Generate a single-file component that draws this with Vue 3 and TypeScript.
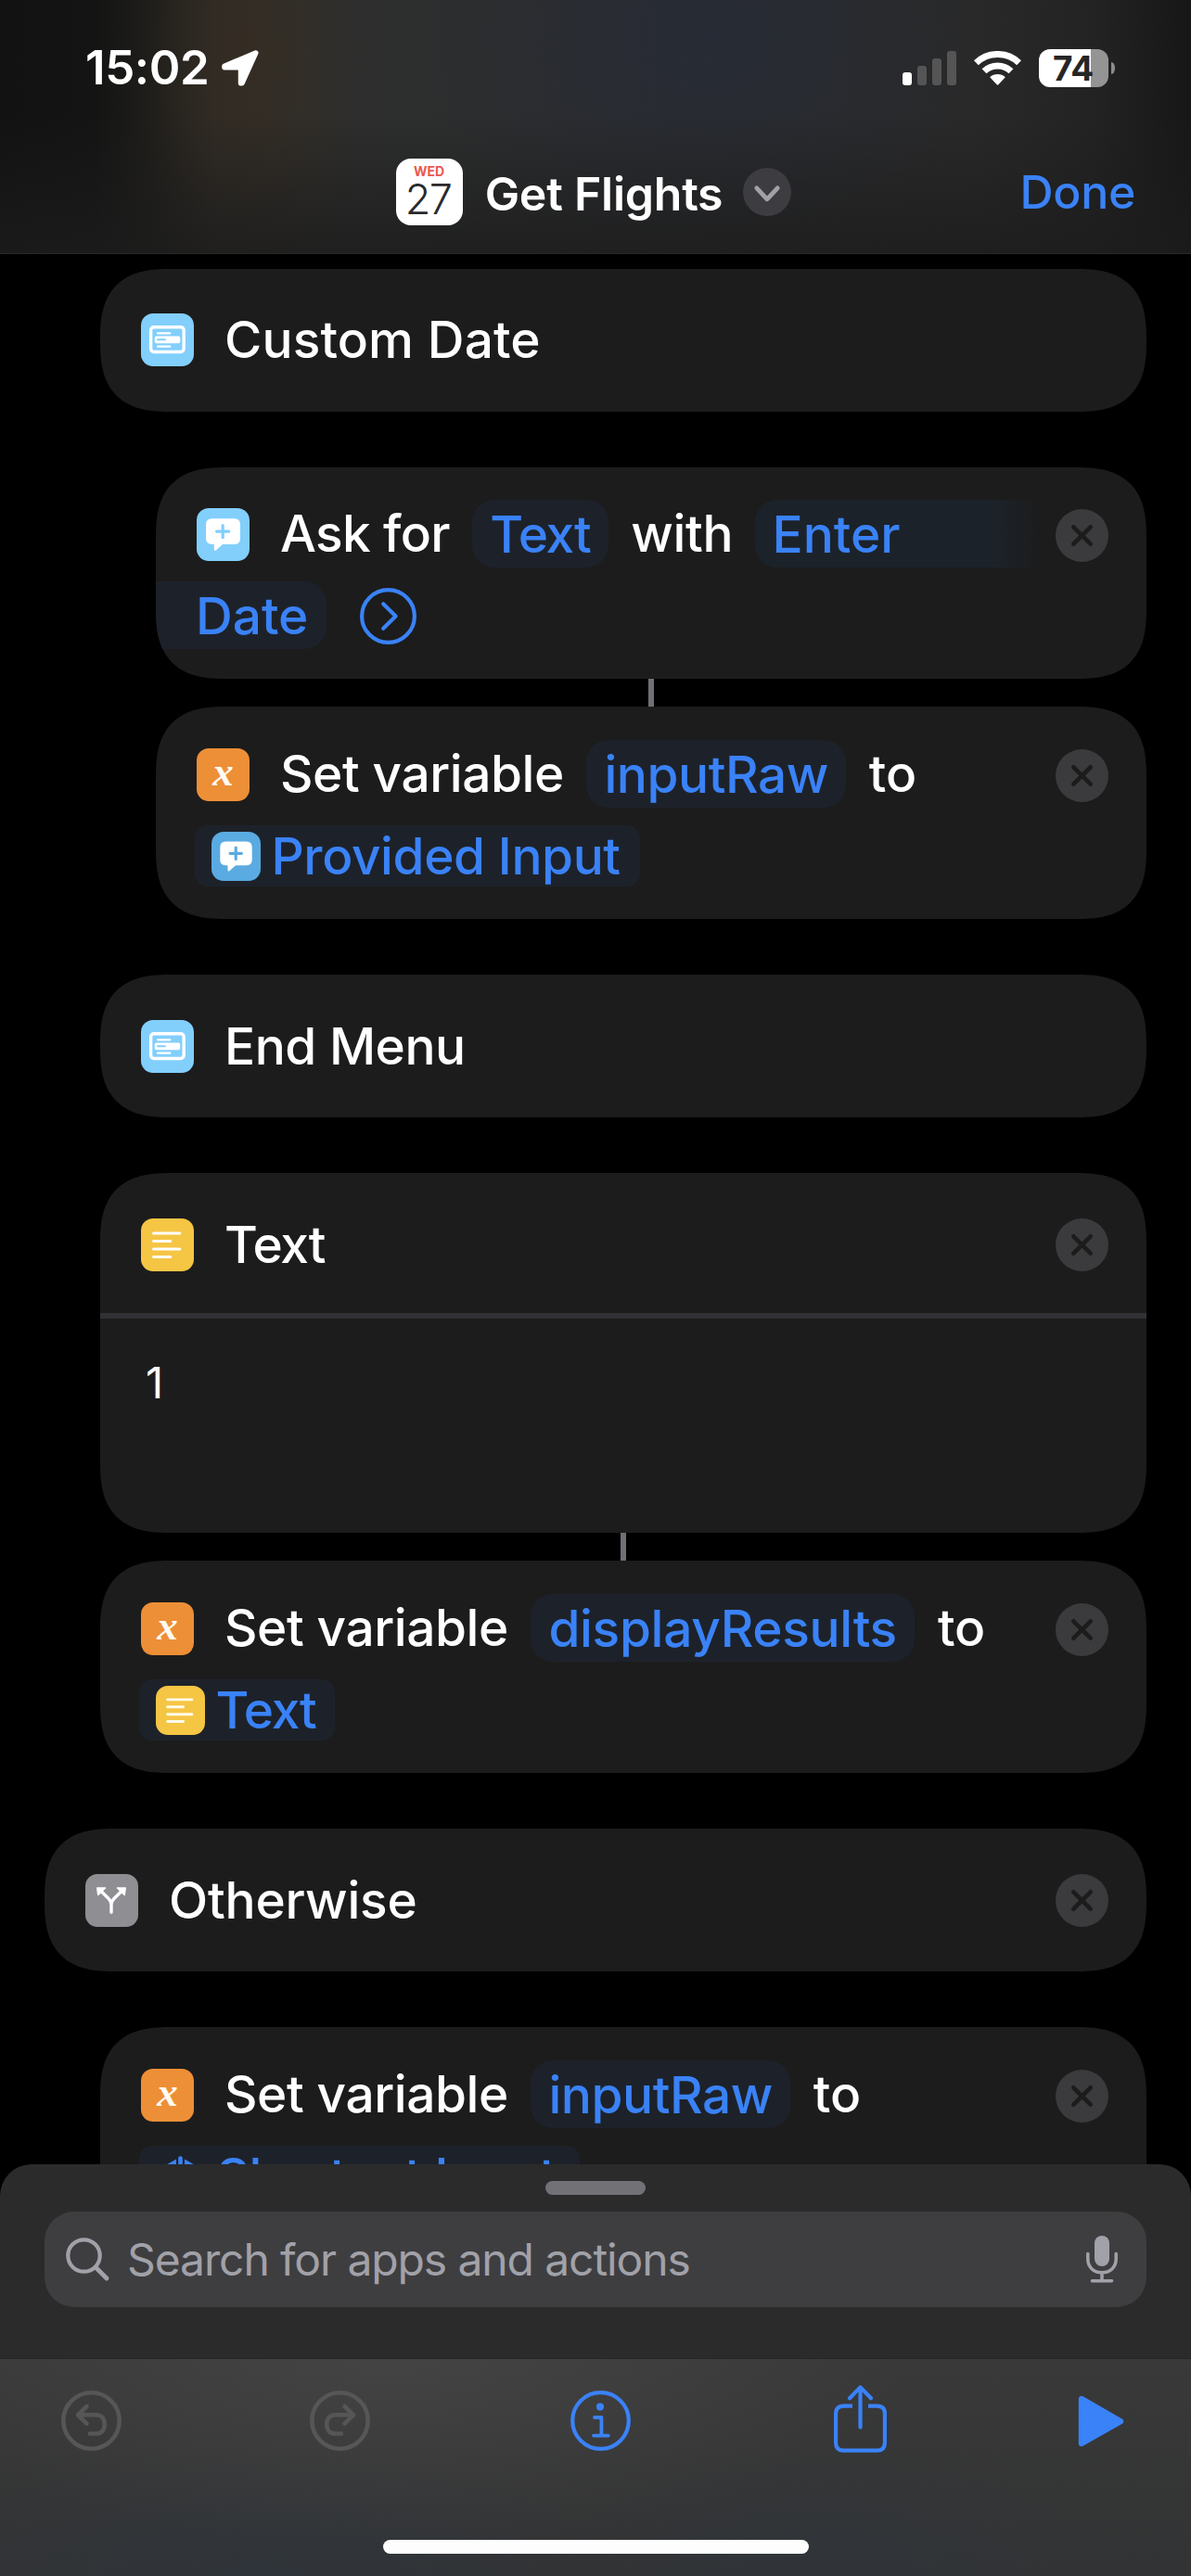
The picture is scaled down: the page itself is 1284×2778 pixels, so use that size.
<script setup lang="ts">
type Glyph = 'menu' | 'ask' | 'variable' | 'text' | 'branch' | 'input'

interface Token {
  glyph: Glyph
  label: string
  spacing: number
}

interface Action {
  id: number
  indent: 0 | 1 | 2
  kind: 'single' | 'ask' | 'variable' | 'text'
  glyph: Glyph
  title: string
  spacing: number
  removable: boolean
  joined?: boolean
  variable?: string
  variableSpacing?: number
  token?: Token
}

const actions: Action[] = [
  { id: 1, indent: 1, kind: 'single', glyph: 'menu', title: 'Custom Date', spacing: 0.13, removable: false },
  { id: 2, indent: 2, kind: 'ask', glyph: 'ask', title: 'Ask for', spacing: -0.7, removable: true },
  {
    id: 3, indent: 2, kind: 'variable', glyph: 'variable', title: 'Set variable', spacing: -0.42, removable: true,
    joined: true, variable: 'inputRaw', variableSpacing: -0.45, token: { glyph: 'ask', label: 'Provided Input', spacing: -0.42 },
  },
  { id: 4, indent: 1, kind: 'single', glyph: 'menu', title: 'End Menu', spacing: -0.5, removable: false },
  { id: 5, indent: 1, kind: 'text', glyph: 'text', title: 'Text', spacing: -1.2, removable: true },
  {
    id: 6, indent: 1, kind: 'variable', glyph: 'variable', title: 'Set variable', spacing: -0.42, removable: true,
    joined: true, variable: 'displayResults', variableSpacing: -0.32, token: { glyph: 'text', label: 'Text', spacing: -1.3 },
  },
  { id: 7, indent: 0, kind: 'single', glyph: 'branch', title: 'Otherwise', spacing: -0.2, removable: true },
  {
    id: 8, indent: 1, kind: 'variable', glyph: 'variable', title: 'Set variable', spacing: -0.42, removable: true,
    variable: 'inputRaw', variableSpacing: -0.45, token: { glyph: 'input', label: 'Shortcut Input', spacing: -0.6 },
  },
]

const tracking = (value = 0) => ({ letterSpacing: `${value}px` })
</script>

<template>
  <div class="screen">
    <header class="header">
      <div class="status">
        <span class="time">15:02</span>
        <svg class="location" width="40" height="39" viewBox="0 0 40 39">
          <path d="M36.7 3 3 17.4V18.6H20.6V35.7H22Z" fill="#fff" stroke="#fff" stroke-width="5.6" stroke-linejoin="round" />
        </svg>
        <svg class="signal" width="58" height="37" viewBox="0 0 58 37">
          <rect x="0" y="23" width="10" height="14" rx="3" fill="#fff" />
          <rect x="16" y="16" width="10" height="21" rx="3" fill="#555" />
          <rect x="32" y="8" width="10" height="29" rx="3" fill="#555" />
          <rect x="48" y="0" width="10" height="37" rx="3" fill="#555" />
        </svg>
        <svg class="wifi" width="51" height="37" viewBox="0 0 51 37">
          <path d="M2.4 12.7A33.5 33.5 0 0 1 48.6 12.7M11 21.8A21 21 0 0 1 40 21.8" fill="none" stroke="#fff" stroke-width="7" />
          <path d="M17.2 28.3A12 12 0 0 1 33.8 28.3L26.3 36.3Q25.5 37 24.7 36.3Z" fill="#fff" />
        </svg>
        <div class="battery"><span>74</span></div>
        <i class="battery-nub"></i>
      </div>
      <div class="nav">
        <div class="title">
          <div class="calendar"><b>WED</b><span>27</span></div>
          <span class="name">Get Flights</span>
          <svg class="chevron" width="52" height="52" viewBox="0 0 52 52">
            <circle cx="26" cy="26" r="26" fill="#3c3c41" />
            <path d="M14.8 21.8 26 33.8 37.2 21.8" fill="none" stroke="#a1a1a8" stroke-width="4.8" stroke-linecap="round" stroke-linejoin="round" />
          </svg>
        </div>
        <span class="done">Done</span>
      </div>
    </header>

    <main class="actions">
      <div v-for="a in actions" :key="a.id" class="slot" :class="['indent-' + a.indent, { joined: a.joined }]">
        <i v-if="a.joined" class="link"></i>
        <section class="card" :class="a.kind">
          <div class="line first">
            <div class="tile" :class="a.glyph">
              <svg v-if="a.glyph === 'menu'" width="57" height="57" viewBox="0 0 57 57">
                <rect x="10.6" y="14.7" width="35.6" height="26.8" rx="3.4" fill="none" stroke="#fff" stroke-width="3.4" />
                <path d="M18 21.3H31.4M18 35.7H31.4" stroke="#fff" stroke-width="2.2" stroke-linecap="round" />
                <rect x="14.8" y="24.6" width="27.4" height="7.6" rx="1.8" fill="#fff" />
                <path d="M18 28.3H26" stroke="#82cffc" stroke-width="2" stroke-linecap="round" />
              </svg>
              <svg v-else-if="a.glyph === 'ask'" width="57" height="57" viewBox="0 0 57 57">
                <path d="M16.5 11.2H40.5Q47 11.2 47 17.7V32.6Q47 39 40.5 39H28L20.8 45.4Q19 46.6 18.8 44.4V39H16.5Q10 39 10 32.6V17.7Q10 11.2 16.5 11.2Z" fill="#fff" />
                <path d="M28.2 18.5V31.7M21.6 25.1H34.8" stroke="#82cffc" stroke-width="3.2" stroke-linecap="round" />
              </svg>
              <span v-else-if="a.glyph === 'variable'" class="var-x">x</span>
              <svg v-else-if="a.glyph === 'text'" width="57" height="57" viewBox="0 0 57 57">
                <path d="M13.6 16H41.8M13.6 24.5H31.8M13.6 33H41.8M13.6 41.5H31.8" stroke="#fff" stroke-width="3.2" stroke-linecap="round" />
              </svg>
              <svg v-else-if="a.glyph === 'branch'" width="57" height="57" viewBox="0 0 57 57">
                <path d="M28 41.3V33Q28 29.5 25.3 26.8L17 18.5M28 33Q28 29.5 30.7 26.8L39 18.5" fill="none" stroke="#fff" stroke-width="3.4" stroke-linecap="round" />
                <path d="M12.8 15H21.5L13.8 22.4ZM43.2 15H34.5L42.2 22.4Z" fill="#fff" stroke="#fff" stroke-width="1.6" stroke-linejoin="round" />
              </svg>
            </div>
            <span class="label" :style="tracking(a.spacing)">{{ a.title }}</span>
            <template v-if="a.kind === 'ask'">
              <span class="pill" :style="tracking(-1.25)">Text</span>
              <span class="word" :style="tracking(-0.4)">with</span>
              <span class="pill open">Enter</span>
            </template>
            <template v-if="a.kind === 'variable'">
              <span class="pill" :style="tracking(a.variableSpacing)">{{ a.variable }}</span>
              <span class="word">to</span>
            </template>
            <svg v-if="a.removable" class="close" width="57" height="57" viewBox="0 0 57 57">
              <circle cx="28.5" cy="28.5" r="28.5" fill="#3b3b3d" />
              <path d="M19.3 19.3 37.7 37.7M37.7 19.3 19.3 37.7" stroke="#1c1c1c" stroke-width="4.6" stroke-linecap="round" />
            </svg>
          </div>

          <div v-if="a.kind === 'ask'" class="line second">
            <span class="pill wrapped">Date</span>
            <svg class="more" width="61" height="61" viewBox="0 0 61 61">
              <circle cx="30.5" cy="30.5" r="28.4" fill="none" stroke="#3a82f7" stroke-width="4.2" />
              <path d="M25.2 17.2 38.6 30.5 25.2 43.8" fill="none" stroke="#3a82f7" stroke-width="4.2" stroke-linecap="round" stroke-linejoin="round" />
            </svg>
          </div>

          <div v-if="a.token" class="line token-line">
            <div class="token" :class="a.token.glyph">
              <div v-if="a.token.glyph !== 'input'" class="tile small" :class="a.token.glyph">
                <svg v-if="a.token.glyph === 'ask'" width="53" height="53" viewBox="0 0 57 57">
                  <path d="M16.5 11.2H40.5Q47 11.2 47 17.7V32.6Q47 39 40.5 39H28L20.8 45.4Q19 46.6 18.8 44.4V39H16.5Q10 39 10 32.6V17.7Q10 11.2 16.5 11.2Z" fill="#fff" />
                  <path d="M28.2 18.5V31.7M21.6 25.1H34.8" stroke="#5aabe1" stroke-width="3.4" stroke-linecap="round" />
                </svg>
                <svg v-else width="53" height="53" viewBox="0 0 57 57">
                  <path d="M13.6 16H41.8M13.6 24.5H31.8M13.6 33H41.8M13.6 41.5H31.8" stroke="#fffbe8" stroke-width="3.2" stroke-linecap="round" />
                </svg>
              </div>
              <svg v-else class="rays" width="53" height="53" viewBox="0 0 53 53">
                <path d="M26.5 6.5V24" stroke="#3a82f7" stroke-width="4.6" stroke-linecap="round" />
                <path d="M22 7.5V14L6 23V16.5ZM31 7.5V14L47 23V16.5Z" fill="#3a82f7" />
              </svg>
              <span :style="tracking(a.token.spacing)">{{ a.token.label }}</span>
            </div>
          </div>

          <div v-if="a.kind === 'text'" class="content">1</div>
        </section>
      </div>
    </main>

    <section class="sheet">
      <i class="grabber"></i>
      <div class="search">
        <svg class="lens" width="50" height="50" viewBox="0 0 50 50">
          <circle cx="20.5" cy="20.5" r="17.2" fill="none" stroke="#a1a1a9" stroke-width="4.2" />
          <path d="M33 33 45 45" stroke="#a1a1a9" stroke-width="4.8" stroke-linecap="round" />
        </svg>
        <span>Search for apps and actions</span>
        <svg class="mic" width="34" height="51" viewBox="0 0 34 51">
          <rect x="9" y="0" width="16" height="33" rx="8" fill="#a1a1a9" />
          <path d="M1.8 19.5V25C1.8 33.8 7.8 39.7 17 39.7S32.2 33.8 32.2 25V19.5M17 40V48M6.4 48.8H27.6" fill="none" stroke="#a1a1a9" stroke-width="3.5" stroke-linecap="round" />
        </svg>
      </div>
    </section>

    <footer class="toolbar">
      <div class="tools">
        <svg width="65" height="65" viewBox="0 0 65 65" fill="none" stroke="#565656" stroke-width="4.6" stroke-linecap="round" stroke-linejoin="round">
          <circle cx="32.5" cy="32.5" r="30.2" />
          <path d="M27.5 17 18 26.3 27.5 35.6M19 26.3H37.5C44 26.3 46.8 31 46.8 36.4S44 46.5 37.5 46.5H31" />
        </svg>
        <svg class="redo" width="65" height="65" viewBox="0 0 65 65" fill="none" stroke="#565656" stroke-width="4.6" stroke-linecap="round" stroke-linejoin="round">
          <circle cx="32.5" cy="32.5" r="30.2" />
          <path d="M37.5 17 47 26.3 37.5 35.6M46 26.3H27.5C21 26.3 18.2 31 18.2 36.4S21 46.5 27.5 46.5H34" />
        </svg>
        <svg class="info" width="65" height="65" viewBox="0 0 65 65" fill="none" stroke="#3a82f7" stroke-width="4.2" stroke-linecap="round" stroke-linejoin="round">
          <circle cx="32.5" cy="32.5" r="30.3" />
          <circle cx="32" cy="17.6" r="4.1" fill="#3a82f7" stroke="none" />
          <path d="M26 29H33.4V48.6M25 48.6H40.8" stroke-width="3.8" />
        </svg>
        <svg class="share" width="57" height="73" viewBox="0 0 57 73" fill="none" stroke="#3a82f7" stroke-width="4.2" stroke-linecap="round" stroke-linejoin="round">
          <path d="M20 22.6H10.5Q2.1 22.6 2.1 31V62.4Q2.1 70.6 10.5 70.6H46.5Q54.9 70.6 54.9 62.4V31Q54.9 22.6 46.5 22.6H37" stroke-linecap="butt" />
          <path d="M28.5 2.8V45.6M17 14.2 28.5 2.4 40 14.2" />
        </svg>
        <svg class="play" width="50" height="56" viewBox="0 0 50 56">
          <path d="M4 4V52L46 28.2Z" fill="#3a82f7" stroke="#3a82f7" stroke-width="6.4" stroke-linejoin="round" />
        </svg>
      </div>
      <i class="home"></i>
    </footer>
  </div>
</template>

<style>
body {
  background: #000;
}
</style>

<style scoped>
.screen {
  width: 1284px;
  height: 2778px;
  display: flex;
  flex-direction: column;
  overflow: hidden;
  background: #000;
  color: #fff;
  font-family: Inter, "Liberation Sans", sans-serif;
}
svg {
  display: block;
  flex: none;
}
i {
  display: block;
}

.header {
  height: 274px;
  box-sizing: border-box;
  flex: none;
  border-bottom: 1px solid #292929;
  background:
    linear-gradient(180deg, rgba(28, 28, 28, 0) 45%, rgba(28, 28, 28, 0.8) 100%),
    radial-gradient(ellipse 120px 330px at 268px 60px, rgba(64, 46, 28, 0.42), rgba(64, 46, 28, 0) 100%),
    radial-gradient(ellipse 300px 240px at 770px 40px, rgba(36, 44, 62, 0.5), rgba(36, 44, 62, 0) 100%),
    linear-gradient(90deg, #121212 0, #141414 100px, #1e1d1a 160px, #2c2a27 230px, #2e2e2c 330px, #2d2e2e 430px, #2b2c2e 640px, #292929 1050px, #232323 1180px, #171717 1284px);
}
.status {
  height: 146px;
  display: flex;
  align-items: center;
}
.time {
  margin-left: 92px;
  font-size: 51px;
  font-weight: 600;
  line-height: 62px;
  letter-spacing: -0.4px;
  width: 147px;
}
.signal {
  margin-left: 694px;
}
.wifi {
  margin-left: 19px;
}
.battery {
  width: 75px;
  height: 41px;
  margin-left: 19px;
  border-radius: 12px;
  background: linear-gradient(90deg, #fff 56px, #949494 56px);
  color: #262626;
  font-size: 37px;
  font-weight: 700;
  line-height: 41px;
}
.battery span {
  margin-left: 15px;
}
.battery-nub {
  width: 4px;
  height: 13px;
  margin-left: 3px;
  border-radius: 0 4px 4px 0 / 0 6px 6px 0;
  background: #8c8c8c;
}
.nav {
  display: grid;
  grid-template-columns: 1fr auto 1fr;
  align-items: center;
  height: 122px;
  padding-right: 4px;
}
.title {
  grid-column: 2;
  display: flex;
  align-items: center;
}
.calendar {
  width: 72px;
  height: 72px;
  border-radius: 16px;
  background: #fff;
  display: flex;
  flex-direction: column;
  align-items: center;
}
.calendar b {
  font-size: 14px;
  line-height: 14px;
  margin-top: 7px;
  color: #ea5850;
}
.calendar span {
  font-size: 45px;
  font-weight: 300;
  line-height: 44px;
  letter-spacing: -1.6px;
  color: #2a2a2c;
  margin-top: 1px;
  margin-right: 2px;
}
.name {
  margin-left: 24px;
  font-size: 50px;
  font-weight: 600;
  line-height: 60px;
  letter-spacing: -0.25px;
  padding-top: 4px;
}
.chevron {
  margin-left: 22px;
}
.done {
  justify-self: end;
  margin-right: 56px;
  font-size: 50px;
  font-weight: 500;
  line-height: 60px;
  letter-spacing: -0.3px;
  color: #3a82f7;
}

.actions {
  flex: 1;
  min-height: 0;
  overflow: hidden;
  padding-top: 16px;
  font-size: 55px;
  font-weight: 500;
}
.slot {
  margin: 0 48px 60px;
}
.slot:has(+ .joined) {
  margin-bottom: 0;
}
.indent-1 {
  margin-left: 108px;
}
.indent-2 {
  margin-left: 168px;
}
.link {
  width: 6px;
  height: 30px;
  margin: 0 auto;
  background: #6e7076;
}
.card {
  height: 229px;
  box-sizing: border-box;
  padding-top: 36px;
  overflow: hidden;
  border-radius: 60px;
  background: #1c1c1c;
}
@supports (corner-shape: squircle) {
  .card {
    border-radius: 77px;
    corner-shape: superellipse(1.42);
  }
}
.card.ask {
  height: 228px;
  padding-top: 35px;
}
.card.single {
  height: 154px;
  padding-top: 0;
}
.card.text {
  height: 388px;
  padding-top: 0;
}
.line {
  display: flex;
  align-items: center;
  height: 73px;
  padding-left: 44px;
  line-height: 75px;
  white-space: pre;
}
.single .first {
  height: 154px;
}
.slot:first-child .first {
  height: 153px;
}
.text .first {
  height: 148px;
  padding-top: 3px;
  border-bottom: 6px solid #313135;
}
.tile {
  width: 57px;
  height: 57px;
  flex: none;
  border-radius: 13px;
  margin-right: 33px;
  margin-top: 2px;
}
.single .tile,
.text .tile {
  margin-top: 0;
}
.tile.menu,
.tile.ask {
  background: #82cffc;
}
.tile.variable {
  background: #ed8f37;
  text-align: center;
}
.tile.text {
  background: #f5c544;
}
.tile.branch {
  background: #8e8e93;
}
.var-x {
  display: block;
  font: italic 700 45px/50px "Liberation Serif", serif;
  color: #fffaf2;
}
.pill {
  height: 73px;
  box-sizing: border-box;
  margin-left: 24px;
  padding: 0 19.5px;
  border-radius: 24px;
  background: #1d222a;
  color: #3a82f7;
}
.word {
  margin-left: 24.5px;
}
.pill.open {
  width: 312px;
  padding-left: 18.5px;
  border-radius: 24px 0 0 24px;
  background: linear-gradient(90deg, #1c2229 262px, rgba(28, 34, 41, 0) 306px);
}
.close {
  margin-left: auto;
  margin-right: 41px;
  margin-top: 3px;
}
.single .close,
.text .close {
  margin-top: 0;
}
.second {
  margin-top: 15px;
  padding-left: 0;
}
.pill.wrapped {
  width: 184px;
  margin-left: 0;
  padding: 0 0 0 43px;
  border-radius: 0 24px 24px 0;
}
.more {
  margin-left: 36px;
  margin-top: 2px;
}
.token-line {
  margin-top: 19px;
  height: 66px;
  padding-left: 42px;
}
.token {
  display: flex;
  align-items: center;
  height: 66px;
  padding: 0 21px 0 18px;
  border-radius: 14px;
  background: #1d222a;
  color: #3a82f7;
  line-height: 67px;
}
.tile.small {
  width: 53px;
  height: 53px;
  margin: 0 11.5px 0 0;
}
.token .tile.ask {
  background: #5aabe1;
}
.rays {
  margin-right: 12.5px;
}
.token.input {
  padding-right: 26px;
}
.content {
  padding: 39px 0 0 49px;
  font-size: 47px;
  font-weight: 400;
  line-height: 60px;
}

.sheet {
  height: 210px;
  flex: none;
  box-sizing: border-box;
  border-radius: 34px 34px 0 0;
  background: #2b2b2b;
  border-bottom: 1px solid #262626;
  padding: 18px 48px 0;
}
.grabber {
  width: 108px;
  height: 15px;
  margin: 0 auto;
  border-radius: 7.5px;
  background: #727276;
}
.search {
  height: 103px;
  margin-top: 18px;
  border-radius: 32px;
  background: #3e3e40;
  display: flex;
  align-items: center;
  color: #a1a1a9;
  font-size: 48px;
  line-height: 60px;
  letter-spacing: -1.1px;
  white-space: pre;
}
.lens {
  margin-left: 22px;
  margin-right: 17px;
}
.mic {
  margin-left: auto;
  margin-right: 31px;
}

.toolbar {
  height: 234px;
  flex: none;
  display: flex;
  flex-direction: column;
  background:
    radial-gradient(ellipse 560px 200px at 420px 0, rgba(78, 78, 78, 0.5), rgba(78, 78, 78, 0) 100%),
    radial-gradient(ellipse 400px 130px at 280px 234px, rgba(44, 54, 66, 0.45), rgba(44, 54, 66, 0) 100%),
    radial-gradient(ellipse 300px 130px at 890px 234px, rgba(44, 54, 66, 0.4), rgba(44, 54, 66, 0) 100%),
    linear-gradient(180deg, #393939, #323334);
}
.tools {
  display: flex;
  align-items: center;
  height: 133px;
  padding-left: 66px;
}
.redo {
  margin-left: 203px;
}
.info {
  margin-left: 216px;
}
.share {
  margin-left: 219px;
  margin-top: -5px;
}
.play {
  margin-left: 206px;
}
.home {
  width: 459px;
  height: 15px;
  margin: 62px auto 0;
  border-radius: 7.5px;
  background: #fdfdfd;
}
</style>
